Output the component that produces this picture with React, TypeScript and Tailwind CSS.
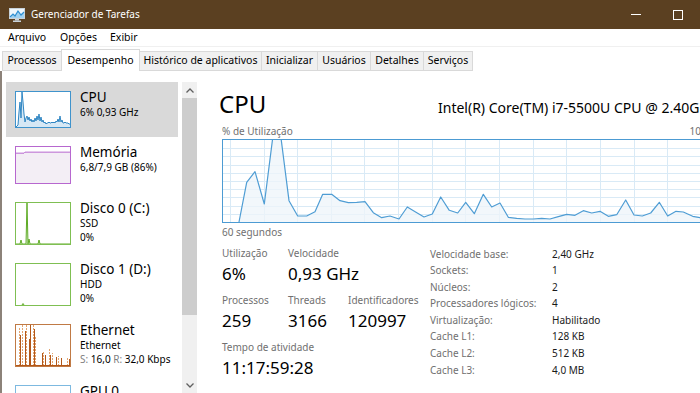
import React from "react";

const chartPts: [number, number][] = [
  [16, 82], [23.7, 42.3], [32, 31.7], [41.3, 64], [49.7, -2], [58, -2], [66, 60.7], [74.7, 76], [83.7, 76],
  [92, 71.7], [99.7, 54.3], [108.7, 54.3], [117, 60.7], [125.3, 62.7], [133.7, 62.3], [142, 61.7],
  [150.3, 72.7], [158.7, 77.7], [167, 76], [176, 79], [184.3, 67], [193, 72.3], [201, 77], [209.3, 74],
  [217.7, 57], [226.3, 70.3], [234.7, 73], [242.7, 62.3], [251.3, 73.7], [260.3, 54.3], [268.7, 67],
  [277, 63], [285.3, 77.3], [293.7, 78.3], [302, 79], [310.3, 79], [318.7, 78.3], [327, 79], [335.3, 76.7],
  [343.7, 74.3], [352, 75.3], [360.3, 70.7], [368.7, 73], [377, 71.3], [385.3, 76.3], [393.7, 74.7],
  [402.7, 60], [411, 75], [419.3, 76], [427.7, 73], [436.3, 62.3], [444.7, 76], [453, 71.3], [460.3, 72],
  [469.7, 76.3], [477, 77.7], [485, 78.5], [491, 78],
];

const vlines = [7, 41, 74, 108, 141, 175, 209, 242, 276, 310, 343, 377, 411, 444, 478];
const hlines = [8, 16, 25, 33, 41, 49, 57, 66, 74];

function MainChart() {
  const line = chartPts.map((p) => p.join(",")).join(" ");
  const area = `16,82 ${line} 491,82`;
  return (
    <div className="w-[493px] h-[84px] border border-[#4c9bd3] shrink-0">
      <svg width="491" height="82" viewBox="0 0 491 82" className="block">
        {vlines.map((x) => (
          <line key={"v" + x} x1={x + 0.5} x2={x + 0.5} y1={0} y2={82} stroke="#d9eaf6" strokeWidth="1" />
        ))}
        {hlines.map((y) => (
          <line key={"h" + y} x1={0} x2={491} y1={y + 0.5} y2={y + 0.5} stroke="#d9eaf6" strokeWidth="1" />
        ))}
        <polygon points={area} fill="#eef4fa" fillOpacity="0.75" />
        <polyline points={line} fill="none" stroke="#4f9dd4" strokeWidth="1.2" strokeLinejoin="round" />
      </svg>
    </div>
  );
}

const cpuMini: [number, number][] = [
  [0, 35], [2, 33], [3, 20], [4, 10], [5, 26], [6, 0], [7, 10], [8, 22], [9, 30], [10, 26], [11, 24], [12, 28],
  [13, 25], [14, 29], [15, 27], [16, 30], [17, 28], [18, 30], [19, 26], [20, 29], [21, 24], [22, 28], [23, 22],
  [24, 29], [25, 25], [26, 30], [27, 28], [28, 31], [29, 30], [30, 32], [31, 31], [32, 31], [33, 30], [34, 31],
  [35, 31], [36, 30], [37, 31], [38, 30], [39, 31], [40, 29], [41, 30], [42, 27], [43, 30], [44, 24], [45, 30],
  [46, 28], [47, 31], [48, 31], [49, 30], [50, 31], [51, 31], [52, 31], [53, 32], [54, 32],
];

function CpuThumb() {
  const line = cpuMini.map((p) => p.join(",")).join(" ");
  return (
    <div className="w-[56px] self-stretch border border-[#3f93cc] bg-white shrink-0">
      <svg viewBox="0 0 54 35" preserveAspectRatio="none" className="block w-full h-full">
        <polygon points={`0,35 ${line} 54,35`} fill="#d6e8f5" />
        <polyline points={line} fill="none" stroke="#2f86c3" strokeWidth="1" vectorEffect="non-scaling-stroke" />
      </svg>
    </div>
  );
}

function MemThumb() {
  return (
    <div className="w-[56px] self-stretch border border-[#b767cf] bg-white shrink-0">
      <svg viewBox="0 0 54 35" preserveAspectRatio="none" className="block w-full h-full">
        <polygon points="0,6 8,6 9,5 54,5 54,35 0,35" fill="#f3eef5" />
        <polyline points="0,6 8,6 9,5 54,5" fill="none" stroke="#b767cf" strokeWidth="1" vectorEffect="non-scaling-stroke" />
      </svg>
    </div>
  );
}

function Disk0Thumb() {
  const line = "0,41 4,41 5,37 6,41 10,41 11,0 12,41 13,36 14,41 22,41 23,37 24,41 54,41";
  return (
    <div className="w-[56px] self-stretch border border-[#7fbf52] bg-white shrink-0">
      <svg viewBox="0 0 54 41" preserveAspectRatio="none" className="block w-full h-full">
        <polygon points={line} fill="#e6f3dc" />
        <polyline points={line} fill="none" stroke="#5eab25" strokeWidth="1" vectorEffect="non-scaling-stroke" />
      </svg>
    </div>
  );
}

function Disk1Thumb() {
  return (
    <div className="w-[56px] self-stretch border border-[#7fbf52] bg-white shrink-0">
      <svg viewBox="0 0 54 41" preserveAspectRatio="none" className="block w-full h-full">
        <polyline points="6,41 7,39.5 8,41" fill="none" stroke="#5eab25" strokeWidth="1" vectorEffect="non-scaling-stroke" />
      </svg>
    </div>
  );
}

function EthThumb() {
  const spikes: [number, number, boolean][] = [
    [3, 2, true], [4, 10, false], [6, 0, true], [9, 6, false], [10, 0, true], [13, 14, false], [14, 0, false],
    [17, 0, true], [18, 4, false], [19, 12, true], [26, 28, false], [27, 26, true], [29, 30, false], [33, 24, true],
    [34, 30, false], [36, 28, true], [40, 32, false], [42, 31, true], [45, 33, false], [51, 33, true], [53, 34, false],
  ];
  return (
    <div className="w-[56px] self-stretch border border-[#c07a45] bg-white shrink-0">
      <svg viewBox="0 0 54 41" preserveAspectRatio="none" className="block w-full h-full">
        {spikes.map(([x, y, d], i) => (
          <line
            key={i}
            x1={x + 0.5}
            x2={x + 0.5}
            y1={41}
            y2={y}
            stroke={d ? "#e3a46f" : "#b3581a"}
            strokeWidth="1"
            strokeDasharray={d ? "2 1" : undefined}
            vectorEffect="non-scaling-stroke"
          />
        ))}
        <polyline points="0,40.5 54,40.5" stroke="#b3581a" strokeWidth="1" vectorEffect="non-scaling-stroke" />
      </svg>
    </div>
  );
}

function GpuThumb() {
  return <div className="w-[56px] self-stretch border border-[#7db9e0] bg-white shrink-0" />;
}

type Item = {
  title: string;
  lines: React.ReactNode[];
  thumb: React.ReactNode;
  h: string;
  sel?: boolean;
};

const items: Item[] = [
  { title: "CPU", lines: ["6%  0,93 GHz"], thumb: <CpuThumb />, h: "h-[55px]", sel: true },
  { title: "Memória", lines: ["6,8/7,9 GB (86%)"], thumb: <MemThumb />, h: "h-[56px]" },
  { title: "Disco 0 (C:)", lines: ["SSD", "0%"], thumb: <Disk0Thumb />, h: "h-[61px]" },
  { title: "Disco 1 (D:)", lines: ["HDD", "0%"], thumb: <Disk1Thumb />, h: "h-[61px]" },
  {
    title: "Ethernet",
    lines: [
      "Ethernet",
      <span key="s">
        <span className="text-[#808080]">S:</span> 16,0 <span className="text-[#808080]">R:</span> 32,0 Kbps
      </span>,
    ],
    thumb: <EthThumb />,
    h: "h-[61px]",
  },
  { title: "GPU 0", lines: ["Intel(R) HD Graphics 5500"], thumb: <GpuThumb />, h: "h-[61px]" },
];

function Sidebar() {
  return (
    <div className="w-[195px] shrink-0 flex overflow-hidden">
      <div className="ml-[4px] w-[172px] pt-[11px] flex flex-col">
        {items.map((it) => (
          <div
            key={it.title}
            className={`${it.h} shrink-0 flex pl-[9px] pt-[9px] pb-[9px] ${it.sel ? "bg-[#d9d9d9]" : ""}`}
          >
            {it.thumb}
            <div className="ml-[9px] -mt-[2px] flex flex-col whitespace-nowrap">
              <div className="text-[13.5px] leading-[17px] h-[17px]">{it.title}</div>
              {it.lines.map((l, i) => (
                <div key={i} className="text-[10px] leading-[13.7px] h-[13.7px]">
                  {l}
                </div>
              ))}
            </div>
          </div>
        ))}
      </div>
      <div className="ml-[4px] w-[15px] mt-[11px] bg-[#f0f0f0] flex flex-col">
        <div className="h-[16px] flex items-center justify-center">
          <svg width="8" height="5" viewBox="0 0 8 5">
            <polyline points="0.5,4.5 4,1 7.5,4.5" fill="none" stroke="#606060" strokeWidth="1.3" />
          </svg>
        </div>
        <div className="h-[217px] bg-[#cdcdcd]" />
        <div className="flex-1" />
        <div className="h-[16px] flex items-center justify-center">
          <svg width="8" height="5" viewBox="0 0 8 5">
            <polyline points="0.5,0.5 4,4 7.5,0.5" fill="none" stroke="#606060" strokeWidth="1.3" />
          </svg>
        </div>
      </div>
    </div>
  );
}

function Stat({ label, value }: { label: string; value: string }) {
  return (
    <div className="flex flex-col whitespace-nowrap">
      <div className="text-[10px] leading-[14px] h-[14px] text-[#707070]">{label}</div>
      <div className="mt-[4px] text-[17px] leading-[20px] h-[20px]">{value}</div>
    </div>
  );
}

const table: [string, string][] = [
  ["Velocidade base:", "2,40 GHz"],
  ["Sockets:", "1"],
  ["Núcleos:", "2"],
  ["Processadores lógicos:", "4"],
  ["Virtualização:", "Habilitado"],
  ["Cache L1:", "128 KB"],
  ["Cache L2:", "512 KB"],
  ["Cache L3:", "4,0 MB"],
];

function Main() {
  return (
    <div className="flex-1 min-w-0 overflow-hidden pl-[25px] pt-[21px] flex flex-col">
      <div className="flex items-baseline h-[24px] whitespace-nowrap">
        <div className="-ml-[3px] w-[219px] shrink-0 text-[24px] leading-[24px]">CPU</div>
        <div className="text-[14px] leading-[24px]">Intel(R) Core(TM) i7-5500U CPU @ 2.40GHz</div>
      </div>
      <div className="mt-[8px] w-[493px] shrink-0 flex justify-between text-[10px] leading-[14px] h-[14px] text-[#707070]">
        <span>% de Utilização</span>
        <span>100%</span>
      </div>
      <div className="mt-[1px]">
        <MainChart />
      </div>
      <div className="mt-[2px] text-[10px] leading-[14px] h-[14px] text-[#707070]">60 segundos</div>
      <div className="mt-[7px] flex">
        <div className="w-[208px] shrink-0 grid grid-cols-[66px_60px_auto] gap-y-[8.6px]">
          <Stat label="Utilização" value="6%" />
          <div className="col-span-2">
            <Stat label="Velocidade" value="0,93 GHz" />
          </div>
          <Stat label="Processos" value="259" />
          <Stat label="Threads" value="3166" />
          <Stat label="Identificadores" value="120997" />
          <div className="col-span-3">
            <Stat label="Tempo de atividade" value="11:17:59:28" />
          </div>
        </div>
        <div className="flex flex-col -mt-[0.5px]">
          {table.map(([k, v]) => (
            <div key={k} className="flex h-[16.6px] leading-[16.6px] text-[10px] whitespace-nowrap">
              <span className="w-[122px] text-[#707070]">{k}</span>
              <span className="text-[#1a1a1a]">{v}</span>
            </div>
          ))}
        </div>
      </div>
    </div>
  );
}

const tabs = [
  { label: "Processos", w: "w-[60px]" },
  { label: "Desempenho", w: "w-[79px]", sel: true },
  { label: "Histórico de aplicativos", w: "w-[122px]" },
  { label: "Inicializar", w: "w-[56px]" },
  { label: "Usuários", w: "w-[53px]" },
  { label: "Detalhes", w: "w-[53px]" },
  { label: "Serviços", w: "w-[49px]" },
];

function Tabs() {
  return (
    <div className="h-[24px] shrink-0 flex items-end pl-[2px] text-[10.5px]">
      {tabs.map((t, i) =>
        t.sel ? (
          <div
            key={t.label}
            className={`${t.w} h-[22px] -ml-px relative bg-white border-t border-l border-r border-[#d9d9d9] flex items-center justify-center whitespace-nowrap`}
          >
            {t.label}
          </div>
        ) : (
          <div
            key={t.label}
            className={`${t.w} h-[20px] bg-[#f0f0f0] border-t border-b border-r ${i === 0 ? "border-l" : ""} border-[#d9d9d9] flex items-center justify-center whitespace-nowrap`}
          >
            {t.label}
          </div>
        )
      )}
    </div>
  );
}

function TitleBar() {
  return (
    <div className="h-[29px] shrink-0 bg-[#5b4021] flex items-center text-white">
      <svg className="ml-[9px]" width="16" height="14" viewBox="0 0 16 14">
        <rect x="0.5" y="0.5" width="15" height="10" fill="#eef6fc" stroke="#c8d2da" />
        <polygon points="1,10 4,6 6,8 9,3 12,7 15,4 15,10" fill="#9fd0f0" />
        <polyline points="1,9 4,6 6,8 9,3 12,7 15,4" fill="none" stroke="#2e8fd2" strokeWidth="1.2" />
        <rect x="6" y="11" width="4" height="1.5" fill="#c8d2da" />
        <rect x="4" y="12.5" width="8" height="1.5" fill="#c8d2da" />
      </svg>
      <span className="ml-[6px] text-[10px]">Gerenciador de Tarefas</span>
      <div className="ml-auto flex h-full">
        <div className="w-[42px] h-full flex items-center justify-center">
          <div className="w-[10px] h-px bg-white" />
        </div>
        <div className="w-[42px] h-full flex items-center justify-center">
          <div className="w-[10px] h-[10px] border border-white" />
        </div>
        <div className="w-px" />
      </div>
    </div>
  );
}

export default function App() {
  return (
    <div className="w-[700px] h-[393px] overflow-hidden bg-white flex flex-col font-['Noto_Sans',sans-serif] text-black">
      <TitleBar />
      <div className="h-[18px] shrink-0 flex items-center text-[10.5px] border-b border-[#f0f0f0]">
        <span className="ml-[8px] w-[52px]">Arquivo</span>
        <span className="w-[50px]">Opções</span>
        <span>Exibir</span>
      </div>
      <Tabs />
      <div className="flex flex-1 min-h-0">
        <div className="w-[2px] shrink-0 bg-[#8c8279]" />
        <Sidebar />
        <Main />
      </div>
    </div>
  );
}
